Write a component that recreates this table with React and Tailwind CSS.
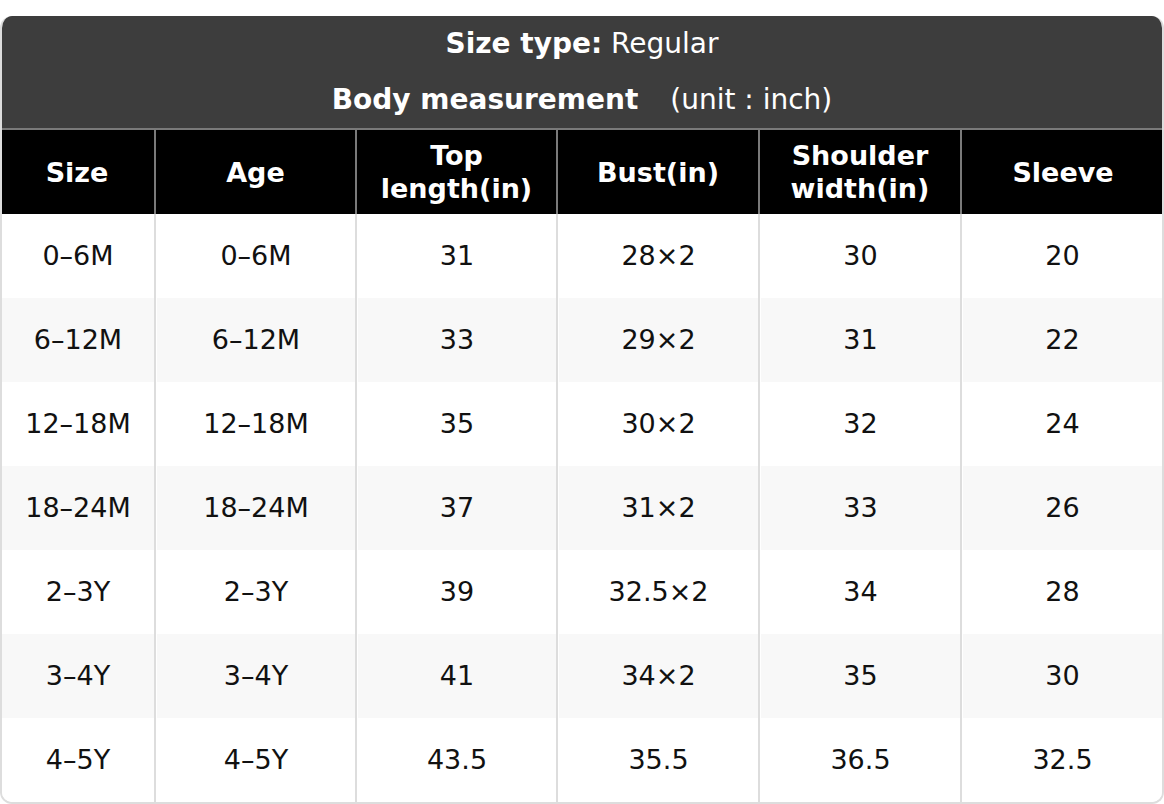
import React from "react";

const headers = [["Size"], ["Age"], ["Top", "length(in)"], ["Bust(in)"], ["Shoulder", "width(in)"], ["Sleeve"]];

const rows = [
    ["0–6M", "0–6M", "31", "28×2", "30", "20"],
    ["6–12M", "6–12M", "33", "29×2", "31", "22"],
    ["12–18M", "12–18M", "35", "30×2", "32", "24"],
    ["18–24M", "18–24M", "37", "31×2", "33", "26"],
    ["2–3Y", "2–3Y", "39", "32.5×2", "34", "28"],
    ["3–4Y", "3–4Y", "41", "34×2", "35", "30"],
    ["4–5Y", "4–5Y", "43.5", "35.5", "36.5", "32.5"],
];

const cols = "grid grid-cols-[154px_201px_201px_202px_202px_1fr]";

const App = () => {
    return (
        <div className="bg-white pt-4 font-['DejaVu_Sans',sans-serif] text-[27px]">
            <div className="rounded-t-[12px] rounded-b-[12px] overflow-hidden border-x-2 border-b-2 border-[#dddddd]">
                <div className="bg-[#3d3d3d] text-white text-[28px]">
                    <div className="h-[56px] flex items-center justify-center">
                        <span className="font-bold">Size type:</span>
                        <span>&nbsp;Regular</span>
                    </div>
                    <div className="h-[56px] flex items-center justify-center">
                        <span className="font-bold">Body measurement</span>
                        <span className="ml-8">(unit : inch)</span>
                    </div>
                </div>
                <div className={`${cols} bg-black text-white font-bold border-t-2 border-[#7a7a7a] -mx-[2px]`}>
                    {headers.map((h, i) => (
                        <div
                            key={i}
                            className={`h-[84px] flex flex-col items-center justify-center leading-[33px] text-center ${i > 0 ? "border-l-2 border-[#7a7a7a]" : ""}`}
                        >
                            {h.map((line) => (
                                <span key={line}>{line}</span>
                            ))}
                        </div>
                    ))}
                </div>
                <div className="text-[#111]">
                    {rows.map((row, r) => (
                        <div key={r} className={`${cols} -ml-[2px]`}>
                            {row.map((cell, i) => (
                                <div
                                    key={i}
                                    className={`h-[84px] flex items-center justify-center border-l-2 border-[#dddddd] ${i === 0 ? "border-transparent" : ""}`}
                                >
                                    <div
                                        className={`w-full h-full flex items-center justify-center ${r % 2 === 1 ? "bg-[#f8f8f8]" : "bg-white"} ${i === 0 ? "" : "ml-[1px]"}`}
                                    >
                                        {cell}
                                    </div>
                                </div>
                            ))}
                        </div>
                    ))}
                </div>
            </div>
        </div>
    );
};

export default App;
